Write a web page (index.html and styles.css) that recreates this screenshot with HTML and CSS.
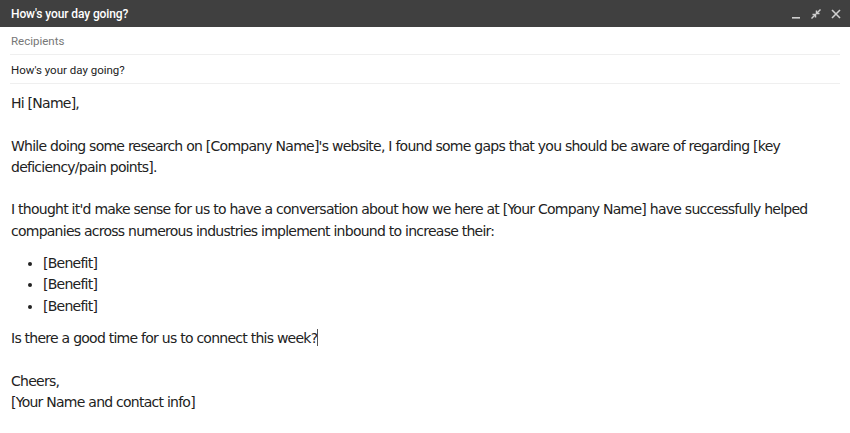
FILE: index.html
```html
<!DOCTYPE html>
<html>
<head>
<meta charset="utf-8">
<link rel="stylesheet" href="styles.css">
</head>
<body>
<div class="compose">
  <div class="titlebar">
    <span class="title">How's your day going?</span>
    <div class="controls">
      <svg class="ic" width="12" height="12" viewBox="0 0 12 12"><rect x="2" y="9" width="8" height="1.6" fill="#cfcfcf"/></svg>
      <svg class="ic" width="12" height="12" viewBox="0 0 12 12"><g fill="none" stroke="#cfcfcf" stroke-width="1.5"><path d="M1.5 10.5 L5 7"/><path d="M2.5 6.5 H5.5 V9.5"/><path d="M10.5 1.5 L7 5"/><path d="M6.5 2.5 V5.5 H9.5"/></g></svg>
      <svg class="ic" width="12" height="12" viewBox="0 0 12 12"><g stroke="#cfcfcf" stroke-width="1.6"><path d="M2 2 L10 10"/><path d="M10 2 L2 10"/></g></svg>
    </div>
  </div>
  <div class="row recipients">Recipients</div>
  <div class="row subject">How's your day going?</div>
  <div class="body">
    <div>Hi [Name],</div>
    <div><br></div>
    <div>While doing some research on [Company Name]'s website, I found some gaps that you should be aware of regarding [key deficiency/pain points].</div>
    <div><br></div>
    <div>I thought it'd make sense for us to have a conversation about how we here at [Your Company Name] have successfully helped companies across numerous industries implement inbound to increase their:</div>
    <ul class="list">
      <li>[Benefit]</li>
      <li>[Benefit]</li>
      <li>[Benefit]</li>
    </ul>
    <div>Is there a good time for us to connect this week?<span class="caret"></span></div>
    <div><br></div>
    <div>Cheers,</div>
    <div>[Your Name and contact info]</div>
  </div>
</div>
</body>
</html>
```
FILE: styles.css
```css
html, body {
  margin: 0;
  padding: 0;
  background: #ffffff;
}
.compose {
  width: 850px;
  height: 433px;
  overflow: hidden;
  font-family: Roboto, "Liberation Sans", Arial, sans-serif;
}
.titlebar {
  height: 27px;
  background: #404040;
  display: flex;
  align-items: center;
  justify-content: space-between;
  padding: 0 8px 0 11px;
  box-sizing: border-box;
}
.title {
  color: #ffffff;
  font-size: 12px;
  font-weight: 500;
  letter-spacing: -0.1px;
}
.controls {
  display: flex;
  gap: 8px;
  align-items: center;
}
.ic {
  display: block;
}
.row {
  margin: 0 10px;
  border-bottom: 1px solid #efefef;
  font-size: 11.5px;
  box-sizing: border-box;
}
.recipients {
  height: 28px;
  line-height: 29px;
  color: #777777;
  padding-left: 1px;
}
.subject {
  height: 29px;
  line-height: 30px;
  color: #222222;
  padding-left: 1px;
}
.body {
  padding: 9px 11px 0 11px;
  font-family: "DejaVu Sans", Verdana, sans-serif;
  font-size: 14px;
  letter-spacing: -0.75px;
  line-height: 21.3px;
  color: #222222;
}
.list {
  margin: 11px 0 11px 0;
  padding-left: 32px;
}
.caret {
  display: inline-block;
  width: 1px;
  height: 17px;
  background: #555;
  vertical-align: -3px;
}
```
